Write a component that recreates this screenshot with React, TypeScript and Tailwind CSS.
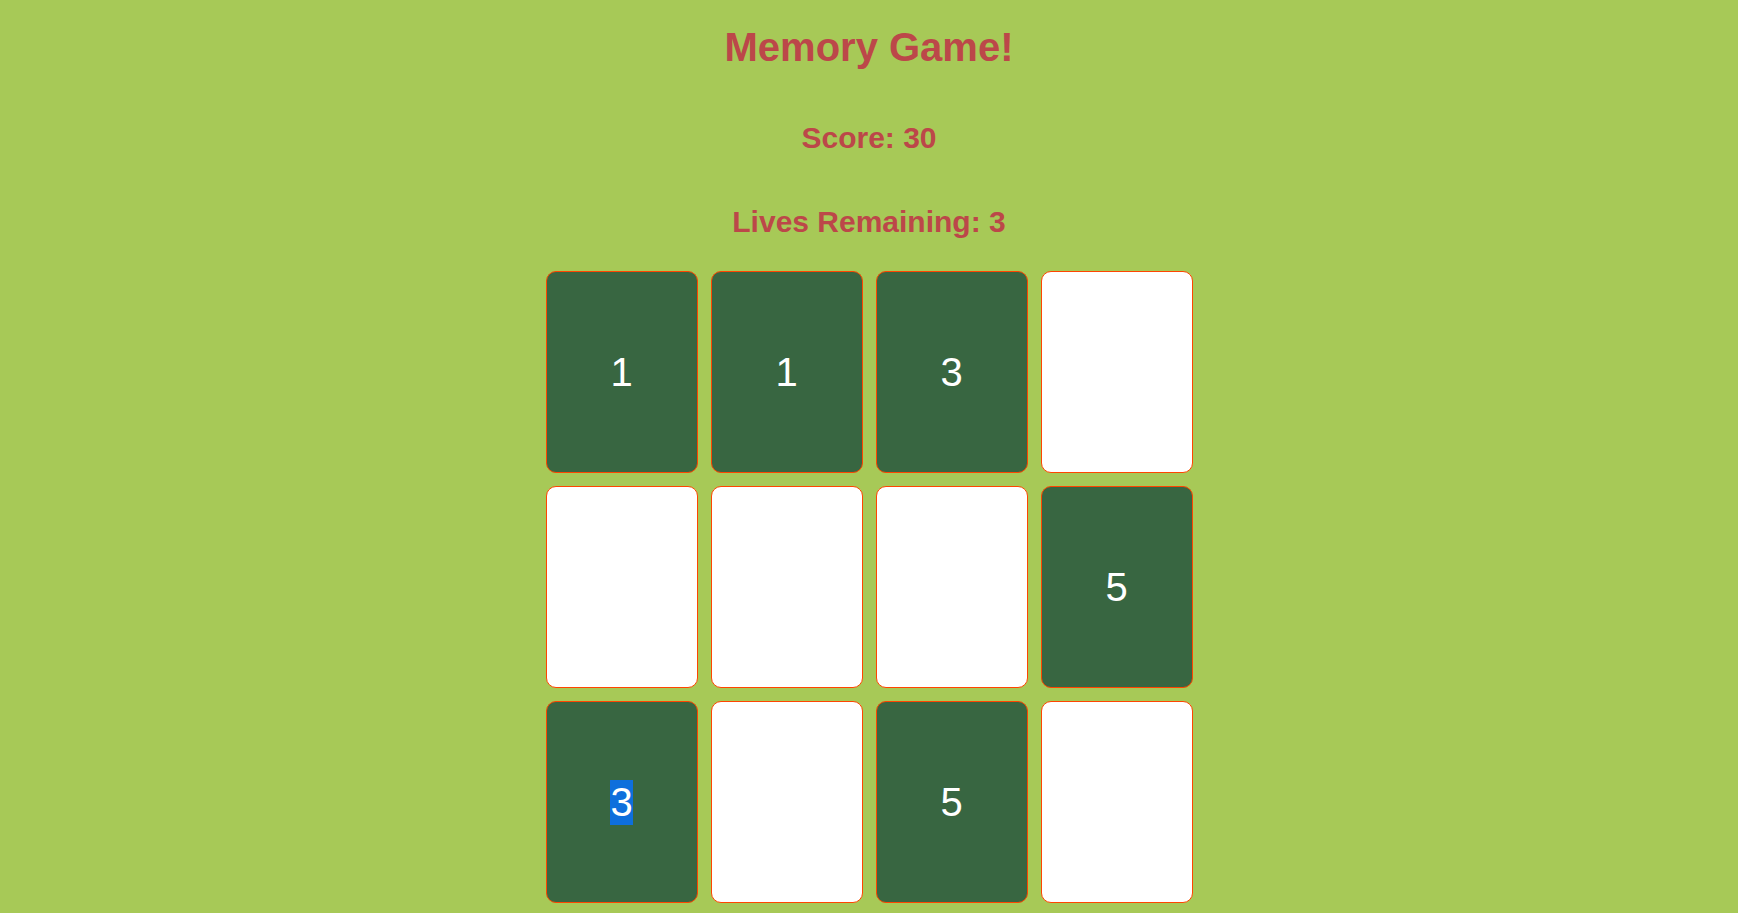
type Card = { value: number; flipped: boolean; selected?: boolean };

const cards: Card[] = [
  { value: 1, flipped: true },
  { value: 1, flipped: true },
  { value: 3, flipped: true },
  { value: 2, flipped: false },
  { value: 4, flipped: false },
  { value: 2, flipped: false },
  { value: 6, flipped: false },
  { value: 5, flipped: true },
  { value: 3, flipped: true, selected: true },
  { value: 6, flipped: false },
  { value: 5, flipped: true },
  { value: 4, flipped: false },
];

export default function App() {
  return (
    <div
      className="min-h-screen bg-[#a7c957] text-center pt-[25px] pb-[10px]"
      style={{ fontFamily: '"Liberation Sans", Arial, sans-serif' }}
    >
      <h1 className="text-[40px] leading-[normal] font-bold text-[#bc4749]">Memory Game!</h1>
      <h2 className="mt-[51px] text-[30px] leading-[normal] font-bold text-[#bc4749]">Score: 30</h2>
      <h2 className="mt-[50px] text-[30px] leading-[normal] font-bold text-[#bc4749]">Lives Remaining: 3</h2>

      <div className="mt-[32px] grid grid-cols-[repeat(4,152px)] gap-[13px] justify-center">
        {cards.map((card, i) => (
          <div
            key={i}
            className={
              card.flipped
                ? "h-[202px] rounded-[10px] border border-[#ff4500] bg-[#386641] text-white text-[40px] leading-[normal] flex items-center justify-center"
                : "h-[202px] rounded-[10px] border border-[#ff4500] bg-white"
            }
          >
            {card.flipped &&
              (card.selected ? (
                <span className="bg-[#0e6fdc] text-white">{card.value}</span>
              ) : (
                <span>{card.value}</span>
              ))}
          </div>
        ))}
      </div>
    </div>
  );
}
